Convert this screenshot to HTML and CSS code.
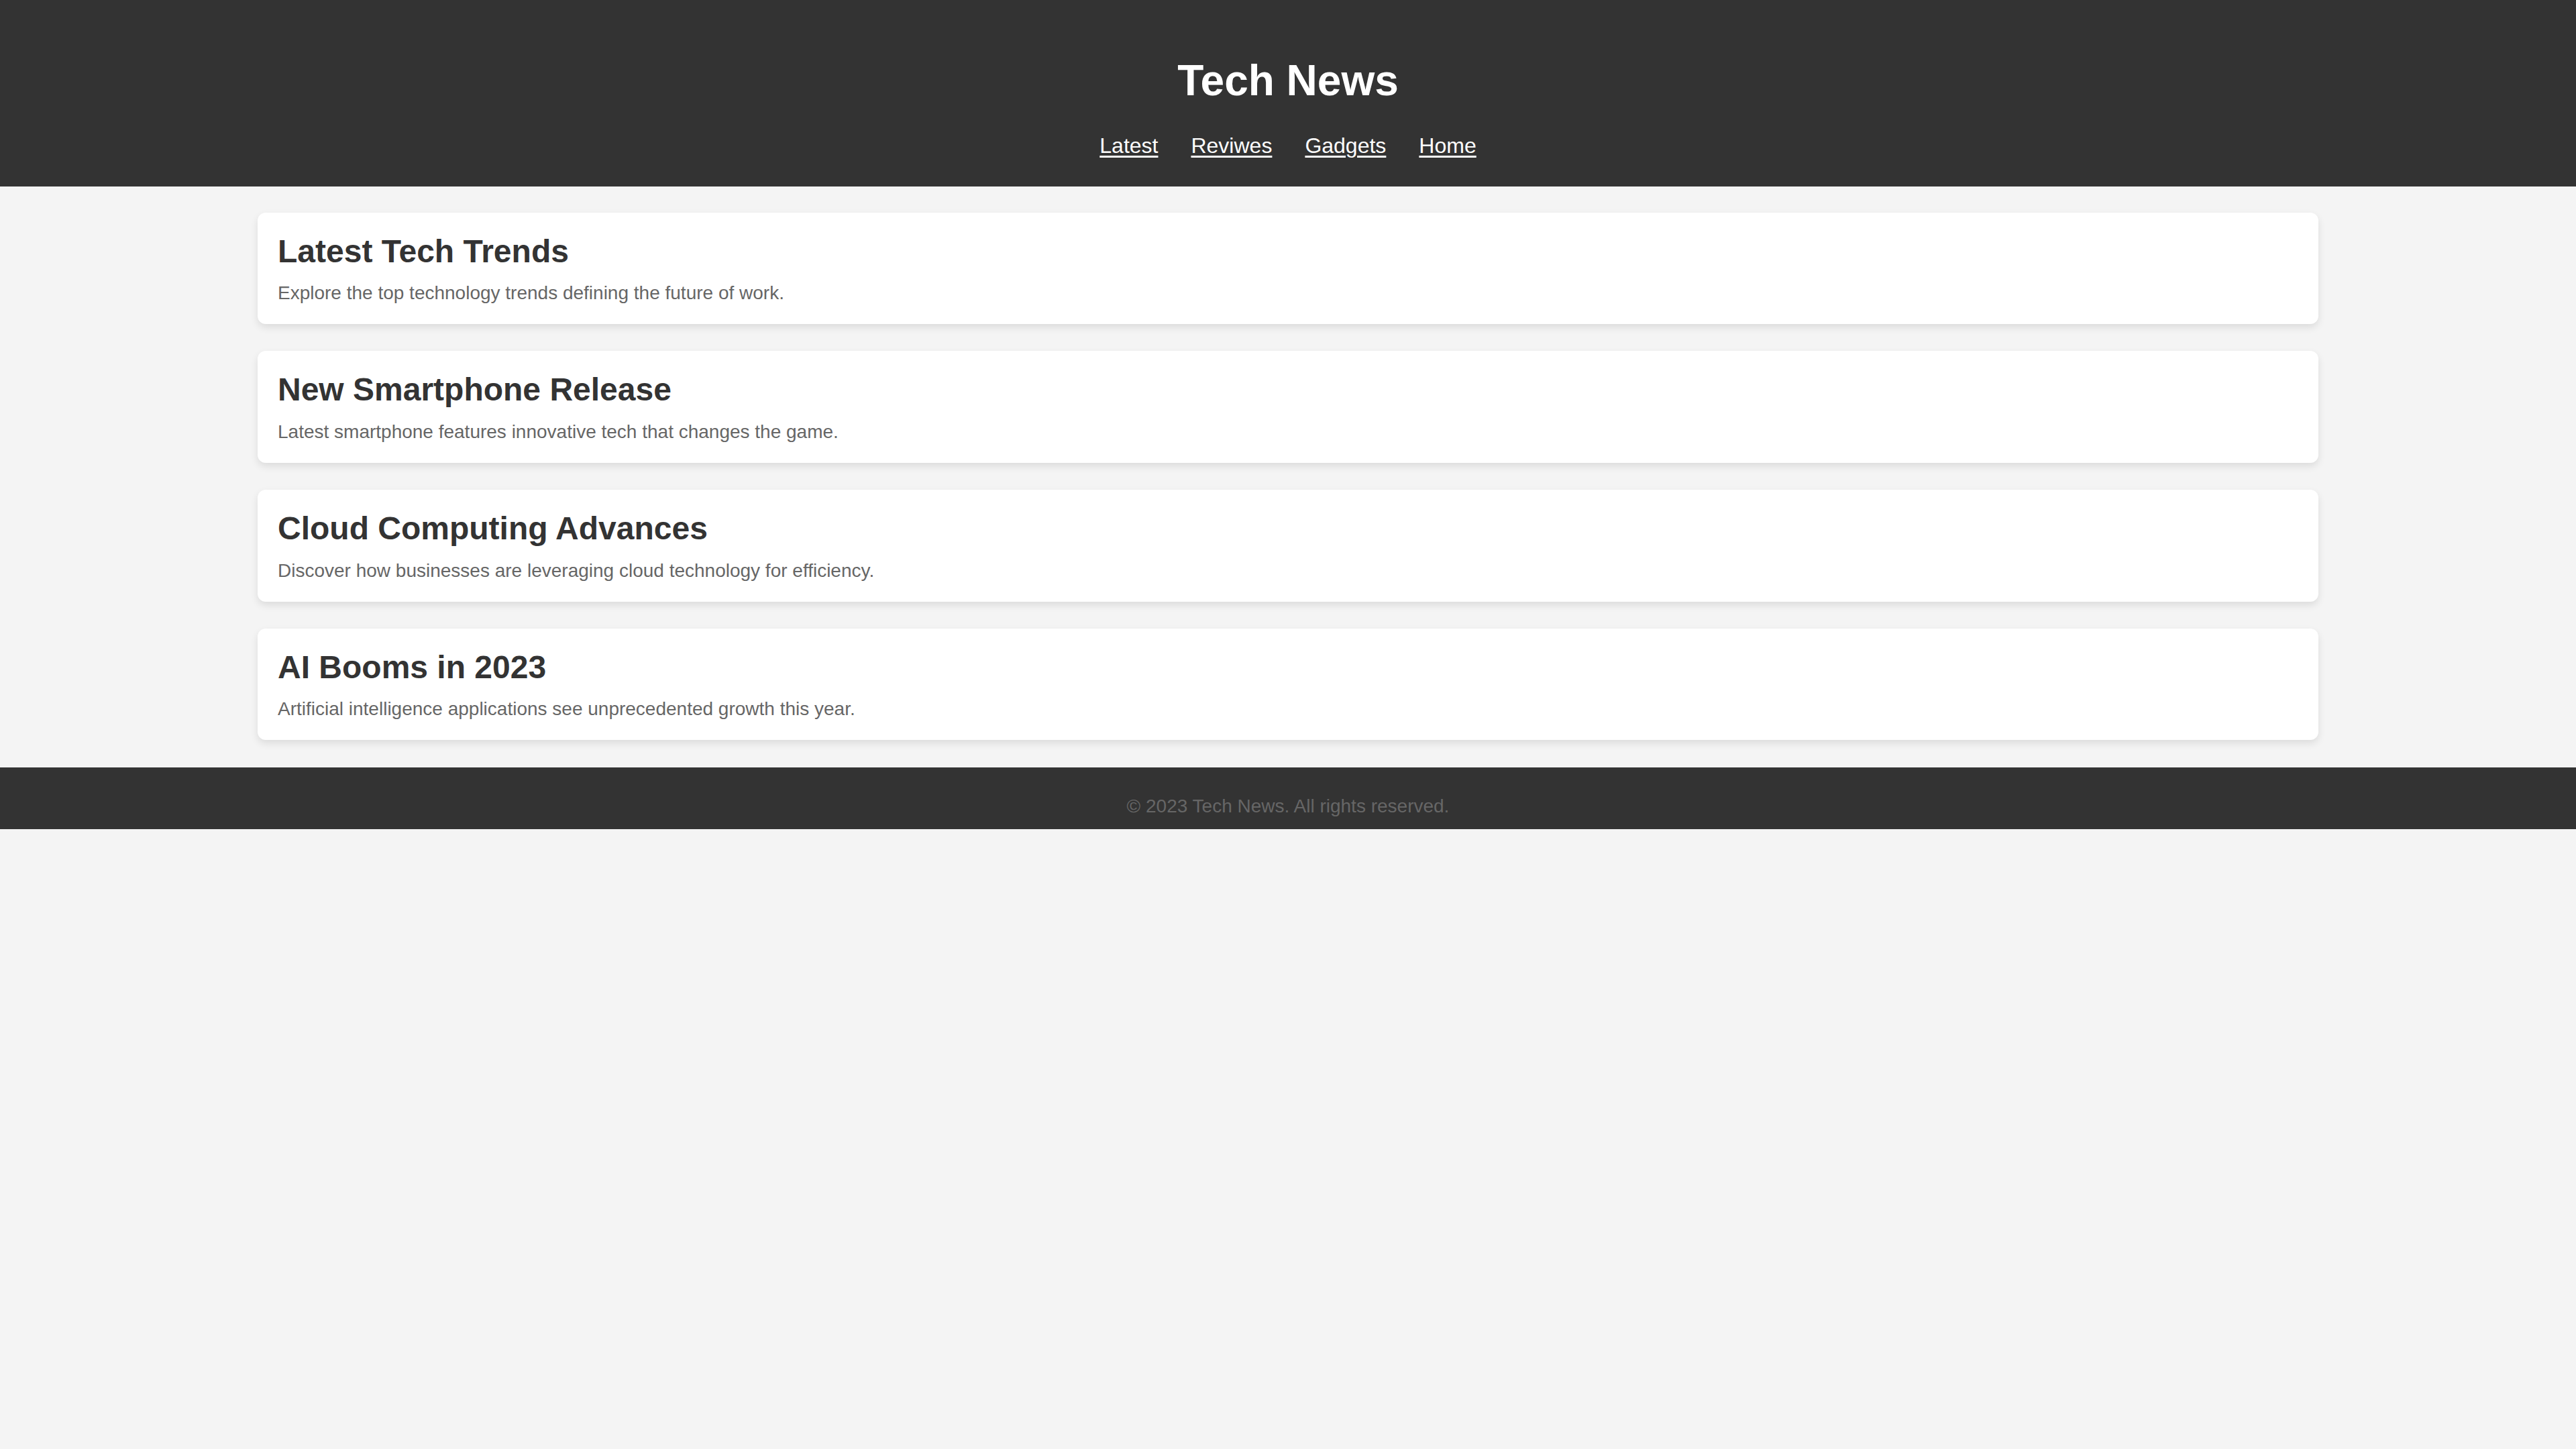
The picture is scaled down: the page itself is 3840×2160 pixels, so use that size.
FILE: index.html
```html
<!DOCTYPE html>
<html lang="en">
<head>
<meta charset="utf-8">
<title>Tech News</title>
<link rel="stylesheet" href="styles.css">
</head>
<body>
<header class="site-header">
  <h1 class="site-title">Tech News</h1>
  <nav class="site-nav">
    <a href="#">Latest</a>
    <a href="#">Reviwes</a>
    <a href="#">Gadgets</a>
    <a href="#">Home</a>
  </nav>
</header>
<main class="articles">
  <article class="card">
    <h2 class="card-title">Latest Tech Trends</h2>
    <p class="card-text">Explore the top technology trends defining the future of work.</p>
  </article>
  <article class="card">
    <h2 class="card-title">New Smartphone Release</h2>
    <p class="card-text">Latest smartphone features innovative tech that changes the game.</p>
  </article>
  <article class="card">
    <h2 class="card-title">Cloud Computing Advances</h2>
    <p class="card-text">Discover how businesses are leveraging cloud technology for efficiency.</p>
  </article>
  <article class="card">
    <h2 class="card-title">AI Booms in 2023</h2>
    <p class="card-text">Artificial intelligence applications see unprecedented growth this year.</p>
  </article>
</main>
<footer class="site-footer">
  <p>&copy; 2023 Tech News. All rights reserved.</p>
</footer>
</body>
</html>
```
FILE: styles.css
```css
html, body {
  margin: 0;
  padding: 0;
}
body {
  background: #f4f4f4;
  font-family: "Liberation Sans", Arial, sans-serif;
  line-height: 1.15;
}
.site-header {
  background: #333333;
  color: #ffffff;
  text-align: center;
  padding: 84px 0 42px;
}
.site-title {
  margin: 0 0 43px;
  font-size: 64px;
  font-weight: 700;
  line-height: 72px;
}
.site-nav {
  display: flex;
  justify-content: center;
  gap: 49px;
  font-size: 32px;
  line-height: 36.6px;
}
.site-nav a {
  color: #ffffff;
  text-decoration: underline;
  text-decoration-thickness: 3px;
  text-underline-offset: 4px;
}
.articles {
  width: 80%;
  margin: 0 auto;
  padding: 39px 0 41px;
  display: flex;
  flex-direction: column;
  gap: 40px;
}
.card {
  background: #ffffff;
  border-radius: 12px;
  box-shadow: 0 5px 12px rgba(0, 0, 0, 0.1);
  padding: 31px 30px 30px;
}
.card-title {
  margin: 0 0 19.5px;
  color: #333333;
  font-size: 48px;
  font-weight: 700;
  line-height: 54px;
}
.card-text {
  margin: 0;
  color: #666666;
  font-size: 28px;
  line-height: 32.2px;
}
.site-footer {
  background: #333333;
  color: #666666;
  text-align: center;
  padding: 42px 0 18px;
}
.site-footer p {
  margin: 0;
  font-size: 28px;
  line-height: 32px;
}
```
